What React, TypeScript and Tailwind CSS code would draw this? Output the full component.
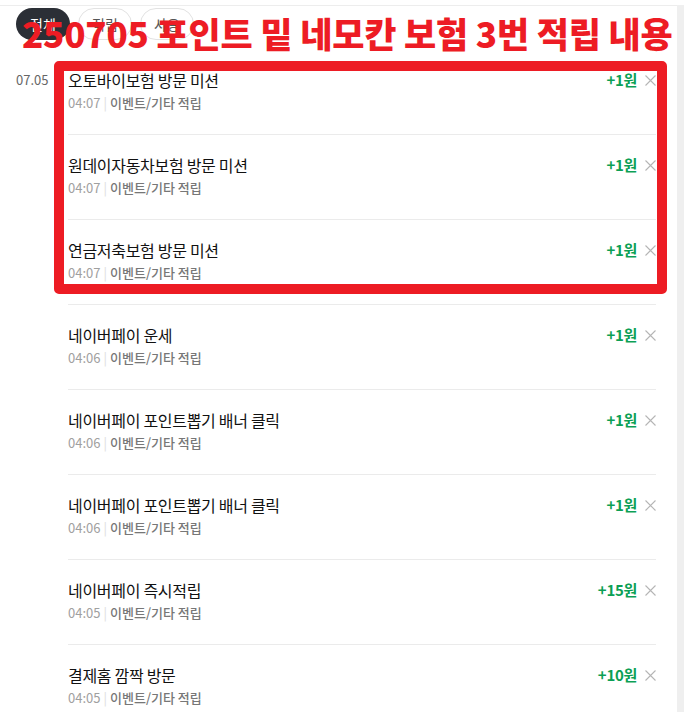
import React from 'react'

type Row = { title: string; time: string; amount: string }

const rows: Row[] = [
  { title: '오토바이보험 방문 미션', time: '04:07', amount: '+1원' },
  { title: '원데이자동차보험 방문 미션', time: '04:07', amount: '+1원' },
  { title: '연금저축보험 방문 미션', time: '04:07', amount: '+1원' },
  { title: '네이버페이 운세', time: '04:06', amount: '+1원' },
  { title: '네이버페이 포인트뽑기 배너 클릭', time: '04:06', amount: '+1원' },
  { title: '네이버페이 포인트뽑기 배너 클릭', time: '04:06', amount: '+1원' },
  { title: '네이버페이 즉시적립', time: '04:05', amount: '+15원' },
  { title: '결제홈 깜짝 방문', time: '04:05', amount: '+10원' },
]

const font = { fontFamily: '"Noto Sans CJK KR", "Noto Sans", sans-serif' }

function CloseIcon() {
  return (
    <svg width="11" height="11" viewBox="0 0 11 11" className="shrink-0">
      <path d="M0.5 0.5L10.5 10.5M10.5 0.5L0.5 10.5" stroke="#b5b5b5" strokeWidth="1.1" />
    </svg>
  )
}

function PointRow({ row, first }: { row: Row; first: boolean }) {
  return (
    <li className={`flex items-start border-t ${first ? 'border-transparent' : 'border-[#ebebeb]'} pt-[20px] pb-[22px]`}>
      <div className="flex-1 min-w-0">
        <p className="text-[16px] leading-[20px] text-[#111] tracking-[-0.3px]">{row.title}</p>
        <p className="mt-[4px] text-[13px] leading-[18px]">
          <span className="text-[#a0a0a0]">{row.time}</span>
          <span className="mx-[3px] text-[#ddd]">|</span>
          <span className="text-[#777] font-medium">이벤트/기타 적립</span>
        </p>
      </div>
      <div className="flex items-center h-[20px] gap-[8px]">
        <span className="text-[15px] font-bold text-[#0c9f55] tracking-[-0.3px]">{row.amount}</span>
        <CloseIcon />
      </div>
    </li>
  )
}

export default function App() {
  return (
    <div className="relative h-[712px] w-[684px] overflow-hidden bg-white pt-[5px]" style={font}>
      <div className="flex h-full">
        <div className="flex-1 border-t border-[#ededed]">
          {/* tabs */}
          <div className="flex gap-[8px] pl-[16px] pt-[2px]">
            <button className="h-[32px] w-[54px] rounded-full bg-[#2b2f36] text-[14px] text-white">전체</button>
            <button className="h-[32px] w-[54px] rounded-full border border-[#e2e2e2] text-[14px] text-[#555]">적립</button>
            <button className="h-[32px] w-[54px] rounded-full border border-[#e2e2e2] text-[14px] text-[#555]">사용</button>
          </div>

          {/* list */}
          <div className="mt-[9px] flex">
            <div className="w-[68px] shrink-0 pl-[16px] pt-[21px] text-[13px] leading-[20px] text-[#666]">07.05</div>
            <ul className="flex-1 pr-[21px]">
              {rows.map((r, i) => (
                <PointRow key={i} row={r} first={i === 0} />
              ))}
            </ul>
          </div>
        </div>
        <div className="w-[7px] bg-[#efefef]" />
      </div>

      {/* annotation overlay */}
      <div className="absolute left-[54px] top-[61px] h-[233px] w-[613px] rounded-[5px] border-[10px] border-[#ed1c24]" />
      <div className="absolute left-[22px] top-[15px] whitespace-nowrap text-[35px] font-black leading-none tracking-[-0.2px] text-[#ed1c24]">
        250705 포인트 밑 네모칸 보험 3번 적립 내용
      </div>
    </div>
  )
}
